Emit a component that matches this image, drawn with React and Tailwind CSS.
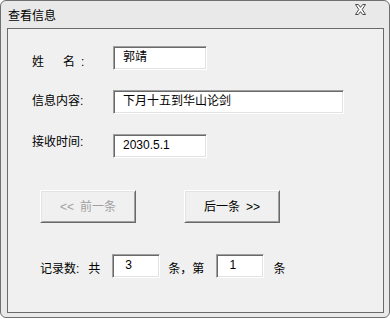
import React from "react"

const font = { fontFamily: '"Liberation Sans", "Noto Sans CJK SC", sans-serif' }

function Field({ width, children }) {
  return (
    <div
      className={`${width} h-[24px] shrink-0 border border-t-[#a0a0a0] border-l-[#a0a0a0] border-r-white border-b-white bg-white pl-[9px] pt-[3px] text-[12px] leading-[14px] text-black shadow-[inset_1px_1px_0_#696969,inset_-1px_-1px_0_#e3e3e3]`}
    >
      {children}
    </div>
  )
}

function Button({ disabled, children }) {
  return (
    <button
      disabled={disabled}
      className={`flex h-[33px] w-[96px] items-center justify-center border border-t-white border-l-white border-r-[#696969] border-b-[#696969] bg-[#f0f0f0] text-[12px] leading-[14px] shadow-[inset_1px_1px_0_#e3e3e3,inset_-1px_-1px_0_#a0a0a0] ${
        disabled ? "text-[#a0a0a0]" : "text-black"
      }`}
    >
      {children}
    </button>
  )
}

export default function App() {
  return (
    <div style={font} className="h-[319px] w-[390px] bg-white">
      <div className="flex h-[318px] w-[390px] flex-col rounded-[6px] border border-[#6f6f6f] bg-[#e9e9e9]">
        {/* title bar */}
        <div className="flex h-[27px] items-start justify-between pl-[7px] pr-[23px]">
          <span className="mt-[8px] text-[12px] leading-[14px] text-black">查看信息</span>
          <svg width="11" height="11" viewBox="0 0 11 11" className="mt-[3px]">
            <path
              d="M0.5 0.5 L3.3 0.5 L5.5 3.4 L7.7 0.5 L10.5 0.5 L7.2 5.5 L10.5 10.5 L7.7 10.5 L5.5 7.6 L3.3 10.5 L0.5 10.5 L3.8 5.5 Z"
              fill="#fff"
              stroke="#4a4a4a"
              strokeWidth="1"
              strokeLinejoin="round"
            />
          </svg>
        </div>

        {/* client area */}
        <div className="ml-[6px] h-[285px] w-[377px] border border-[#6a6a6a] bg-[#f0f0f0] pl-[24px] pt-[17px] text-[12px] leading-[14px] text-black">
          <div className="flex items-start">
            <div className="mt-[9px] w-[81px] shrink-0">
              <span>姓</span>
              <span className="ml-[19px]">名</span>
              <span className="ml-[6px]">:</span>
            </div>
            <Field width="w-[94px]">郭靖</Field>
          </div>

          <div className="mt-[20px] flex items-start">
            <div className="mt-[4px] w-[81px] shrink-0">信息内容:</div>
            <Field width="w-[231px]">下月十五到华山论剑</Field>
          </div>

          <div className="mt-[20px] flex items-start">
            <div className="mt-[1px] w-[81px] shrink-0">接收时间:</div>
            <Field width="w-[94px]">2030.5.1</Field>
          </div>

          <div className="ml-[8px] mt-[32px] flex gap-[48px]">
            <Button disabled>
              <span className="mr-[6px]">&lt;&lt;</span>前一条
            </Button>
            <Button>
              后一条<span className="ml-[6px]">&gt;&gt;</span>
            </Button>
          </div>

          <div className="ml-[8px] mt-[31px] flex items-start">
            <div className="mt-[8px] flex shrink-0">
              <span>记录数:</span>
              <span className="ml-[9px]">共</span>
            </div>
            <div className="ml-[12px]">
              <Field width="w-[48px]">
                <span className="pl-[3px]">3</span>
              </Field>
            </div>
            <div className="ml-[8px] mt-[8px] shrink-0">条，第</div>
            <div className="ml-[12px]">
              <Field width="w-[48px]">
                <span className="pl-[3px]">1</span>
              </Field>
            </div>
            <div className="ml-[9px] mt-[8px] shrink-0">条</div>
          </div>
        </div>
      </div>
    </div>
  )
}
